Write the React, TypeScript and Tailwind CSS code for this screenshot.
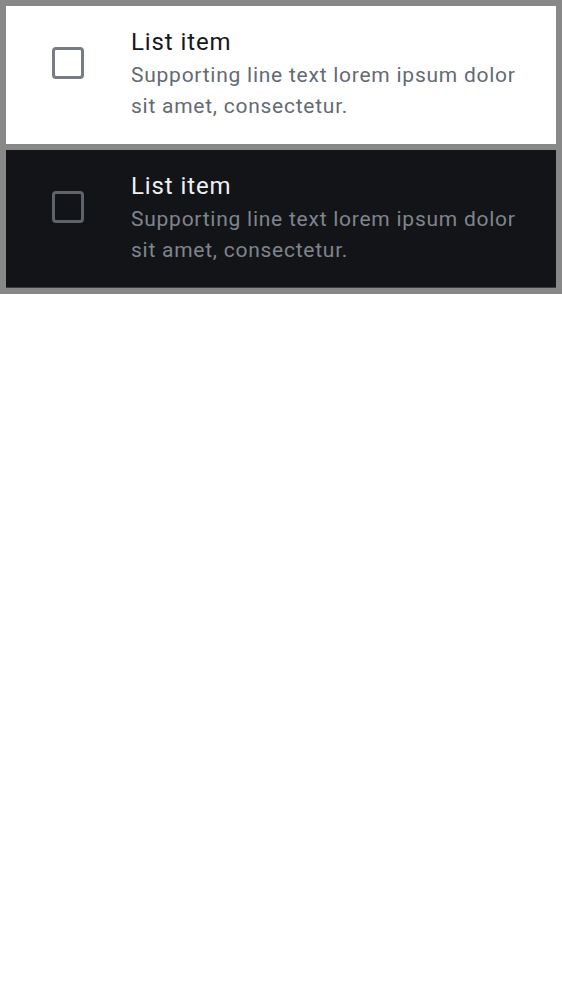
const items = [
  { dark: false },
  { dark: true },
];

function ListItem({ dark }: { dark: boolean }) {
  return (
    <div
      className={
        dark
          ? "flex items-start bg-[#121418] pl-[46px] pr-4 pt-[19px] pb-[21px] border-b border-[#3a3d42]"
          : "flex items-start bg-white pl-[46px] pr-4 pt-[19px] pb-[22px]"
      }
    >
      <span
        className={
          dark
            ? "mt-[22px] w-[32px] h-[32px] shrink-0 rounded-[4px] border-[3px] border-[#5f636a]"
            : "mt-[22px] w-[32px] h-[32px] shrink-0 rounded-[4px] border-[3px] border-[#767b84]"
        }
      />
      <div className="ml-[47px] flex flex-col">
        <p
          className={
            dark
              ? "text-[24px] leading-[35px] tracking-[0.9px] text-[#eef0f3]"
              : "text-[24px] leading-[35px] tracking-[0.9px] text-[#16181c]"
          }
        >
          List item
        </p>
        <p
          className={
            dark
              ? "text-[21px] leading-[31px] tracking-[0.75px] text-[#80858d]"
              : "text-[21px] leading-[31px] tracking-[0.75px] text-[#646a74]"
          }
        >
          Supporting line text lorem ipsum dolor sit amet, consectetur.
        </p>
      </div>
    </div>
  );
}

export default function App() {
  return (
    <div className="bg-[#888888] p-[6px] flex flex-col gap-[6px] font-['Roboto',sans-serif]">
      {items.map((it, i) => (
        <ListItem key={i} dark={it.dark} />
      ))}
    </div>
  );
}
